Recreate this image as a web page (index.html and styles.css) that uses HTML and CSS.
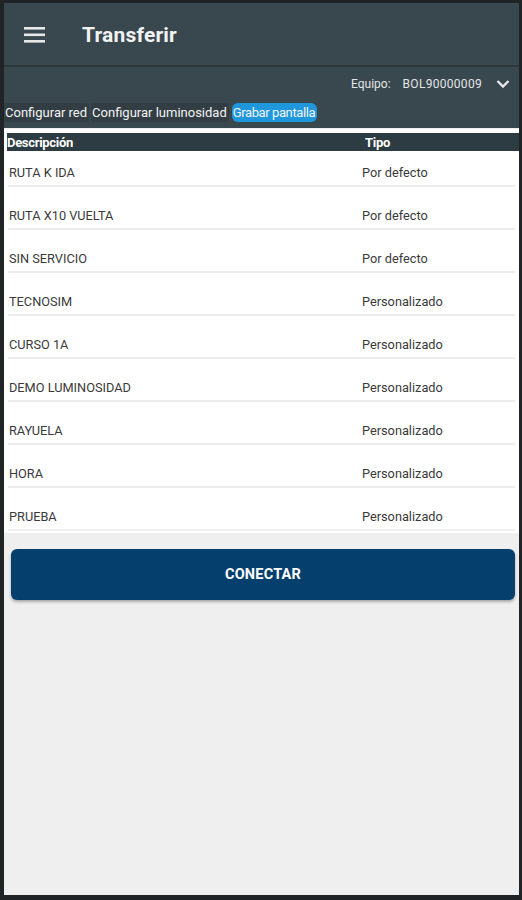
FILE: index.html
```html
<!DOCTYPE html>
<html lang="es">
<head>
<meta charset="utf-8">
<title>Transferir</title>
<link rel="stylesheet" href="styles.css">
</head>
<body>
<div class="screen">
  <header class="appbar">
    <svg class="menu" width="22" height="16" viewBox="0 0 22 16"><rect x="0" y="0" width="21" height="2.6" fill="#e6e8e9"/><rect x="0" y="6.5" width="21" height="2.6" fill="#e6e8e9"/><rect x="0" y="13" width="21" height="2.6" fill="#e6e8e9"/></svg>
    <h1 class="title">Transferir</h1>
  </header>
  <div class="subbar">
    <div class="equipo">
      <span class="eq-label">Equipo:</span>
      <span class="eq-value">BOL90000009</span>
      <svg class="chev" width="14" height="10" viewBox="0 0 14 10"><path d="M1.5 2 L7 7.5 L12.5 2" fill="none" stroke="#e6e8e9" stroke-width="2.4"/></svg>
    </div>
    <div class="tabs">
      <span class="tab">Configurar red</span>
      <span class="tab">Configurar luminosidad</span>
      <span class="tab active">Grabar pantalla</span>
    </div>
  </div>
  <section class="card">
    <div class="thead">
      <span class="c1">Descripción</span>
      <span class="c2">Tipo</span>
    </div>
    <div class="row first"><span class="c1">RUTA K IDA</span><span class="c2">Por defecto</span></div>
    <div class="row"><span class="c1">RUTA X10 VUELTA</span><span class="c2">Por defecto</span></div>
    <div class="row"><span class="c1">SIN SERVICIO</span><span class="c2">Por defecto</span></div>
    <div class="row"><span class="c1">TECNOSIM</span><span class="c2">Personalizado</span></div>
    <div class="row"><span class="c1">CURSO 1A</span><span class="c2">Personalizado</span></div>
    <div class="row"><span class="c1">DEMO LUMINOSIDAD</span><span class="c2">Personalizado</span></div>
    <div class="row"><span class="c1">RAYUELA</span><span class="c2">Personalizado</span></div>
    <div class="row"><span class="c1">HORA</span><span class="c2">Personalizado</span></div>
    <div class="row"><span class="c1">PRUEBA</span><span class="c2">Personalizado</span></div>
  </section>
  <div class="actions">
    <button class="connect">CONECTAR</button>
  </div>
</div>
</body>
</html>
```
FILE: styles.css
```css
html, body {
  margin: 0;
  padding: 0;
}
body {
  background: #202427;
  width: 522px;
  height: 900px;
  overflow: hidden;
  font-family: Roboto, "Liberation Sans", sans-serif;
}
.screen {
  margin: 3px 3px 0 4px;
  height: 892px;
  background: #efefef;
  display: flex;
  flex-direction: column;
}
.appbar {
  height: 62px;
  background: #39474e;
  display: flex;
  align-items: center;
  border-bottom: 2px solid #2d383d;
}
.menu {
  margin-left: 20px;
  margin-top: 2px;
}
.title {
  margin: 2px 0 0 36px;
  color: #f1f2f2;
  font-size: 21px;
  font-weight: 700;
  letter-spacing: 0.2px;
}
.subbar {
  background: #39474e;
  height: 61px;
  display: flex;
  flex-direction: column;
}
.equipo {
  display: flex;
  align-items: center;
  justify-content: flex-end;
  height: 20px;
  margin-top: 7px;
  padding-right: 9px;
  color: #e3e5e6;
  font-size: 12px;
}
.eq-label {
  margin-right: 12px;
}
.eq-value {
  letter-spacing: 0.3px;
  margin-right: 14px;
}
.tabs {
  display: flex;
  gap: 2px;
  margin-top: 9px;
}
.tab {
  height: 19px;
  line-height: 19px;
  padding: 0 2px 0 1px;
  background: #323e44;
  color: #f3f4f4;
  font-size: 13px;
  letter-spacing: 0px;
  border-radius: 2px;
}
.tab.active {
  background: #1e97dd;
  border-radius: 6px;
  padding: 0 2px 0 1px;
  margin-left: 1px;
  letter-spacing: -0.4px;
}
.card {
  background: #ffffff;
  padding: 4px 0 2px 3px;
  margin-top: 1px;
}
.thead {
  display: flex;
  height: 18px;
  align-items: center;
  background: #2d3c42;
  color: #ffffff;
  font-size: 13px;
  font-weight: 700;
  letter-spacing: -0.3px;
}
.thead .c1 {
  width: 358px;
  padding-left: 0;
}
.row {
  display: flex;
  align-items: flex-end;
  height: 43px;
  box-sizing: border-box;
  padding-bottom: 5px;
  margin: 0 4px 0 1px;
  border-bottom: 2px solid #ececec;
  color: #3a3a3a;
  font-size: 12.75px;
}
.row.first {
  height: 36px;
}
.row .c1 {
  width: 353px;
  padding-left: 1px;
}
.row:last-child {
  border-bottom-color: #f0f0f0;
}
.actions {
  padding: 16px 4px 0 7px;
}
.connect {
  display: block;
  width: 100%;
  height: 51px;
  border: none;
  border-radius: 6px;
  background: #053f6d;
  color: #ffffff;
  font-family: Roboto, "Liberation Sans", sans-serif;
  font-size: 14.5px;
  font-weight: 700;
  letter-spacing: 0.2px;
  box-shadow: 0 2px 3px rgba(0, 0, 0, 0.3);
}
```
